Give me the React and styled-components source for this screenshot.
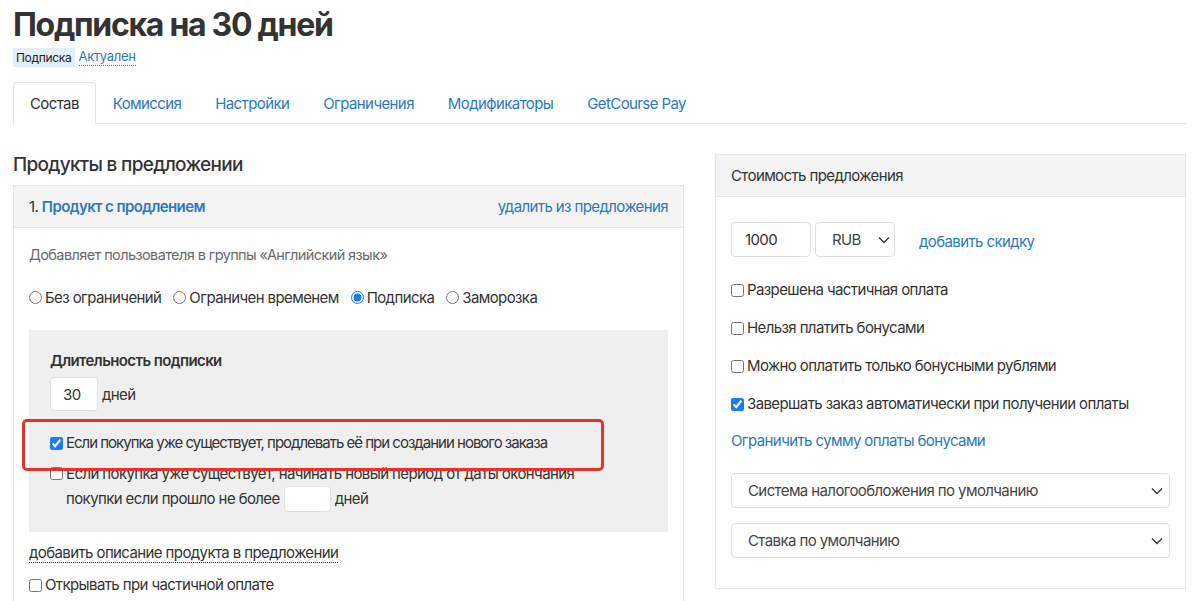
import React from "react";
import styled, { createGlobalStyle } from "styled-components";

const Global = createGlobalStyle`
  html, body { margin: 0; padding: 0; background: #fff; }
  body { font-family: Inter, "Noto Sans", sans-serif; color: #333; letter-spacing: -0.6px; }
  * { box-sizing: border-box; }
`;

const Page = styled.div`
  padding: 0 13px;
  width: 1199px;
`;

const Title = styled.h1`
  margin: 6px 0 0;
  font-size: 32px;
  line-height: 38px;
  font-weight: 700;
  color: #333;
  letter-spacing: -1.3px;
`;

const Meta = styled.div`
  display: flex;
  align-items: center;
  gap: 4px;
  margin-top: 4px;
  height: 19px;
`;

const Badge = styled.span`
  background: #e4eef9;
  font-size: 12px;
  line-height: 19px;
  padding: 0 3px;
  color: #222;
  letter-spacing: -0.3px;
`;

const DottedLink = styled.a`
  color: ${(p) => p.$color || "#2b79c0"};
  font-size: ${(p) => p.$size || 13}px;
  text-decoration: none;
  border-bottom: 1px dotted ${(p) => p.$color || "#2b79c0"};
  line-height: 1.2;
  letter-spacing: ${(p) => (p.$size ? "-0.6px" : "-0.3px")};
`;

const Tabs = styled.div`
  display: flex;
  align-items: flex-start;
  margin-top: 15px;
  height: 42px;
  border-bottom: 1px solid #e2e2e2;
  width: 1173px;
`;

const Tab = styled.div`
  height: 42px;
  padding: 0 16px;
  display: flex;
  align-items: center;
  font-size: 15px;
  color: ${(p) => (p.$active ? "#333" : "#2b79c0")};
  border: 1px solid ${(p) => (p.$active ? "#e2e2e2" : "transparent")};
  border-bottom-color: ${(p) => (p.$active ? "#fff" : "transparent")};
  border-radius: 4px 4px 0 0;
  background: ${(p) => (p.$active ? "#fff" : "transparent")};
  position: relative;
  z-index: ${(p) => (p.$active ? 1 : 0)};
`;

const Main = styled.div`
  display: grid;
  grid-template-columns: 671px 471px;
  column-gap: 31px;
  margin-top: 30px;
  align-items: start;
`;

const LeftCol = styled.div``;

const SectionTitle = styled.h2`
  margin: 0;
  font-size: 19px;
  font-weight: 500;
  line-height: 22px;
  height: 31px;
  color: #333;
  letter-spacing: -0.7px;
`;

const Panel = styled.div`
  border: 1px solid #e6e6e6;
  background: #fff;
`;

const PanelHeader = styled.div`
  height: 42px;
  background: #f4f4f4;
  border-bottom: 1px solid #e6e6e6;
  display: flex;
  align-items: center;
  justify-content: space-between;
  padding: 0 15px;
  font-size: 15px;
`;

const HeaderLink = styled.a`
  color: #2b79c0;
  text-decoration: none;
  font-weight: ${(p) => p.$weight || 400};
`;

const LeftBody = styled.div`
  padding: 15px 15px 6px;
`;

const Desc = styled.div`
  font-size: 14.5px;
  color: #6a6a6a;
  line-height: 24px;
`;

const RadioRow = styled.div`
  display: flex;
  align-items: center;
  gap: 12px;
  margin-top: 18px;
  font-size: 15px;
  height: 24px;
`;

const Choice = styled.label`
  display: inline-flex;
  align-items: center;
  gap: 3px;
  color: #333;
  input {
    margin: 0;
    width: 13px;
    height: 13px;
    accent-color: #1a7cf0;
  }
`;

const GrayBox = styled.div`
  margin-top: 21px;
  background: #efefef;
  padding: 21px 21px 20px;
`;

const Label = styled.div`
  font-size: 15px;
  font-weight: 600;
  line-height: 20px;
`;

const InlineRow = styled.div`
  display: flex;
  align-items: center;
  gap: 4px;
  font-size: 15px;
  margin-top: ${(p) => p.$mt || 0}px;
`;

const TextBox = styled.div`
  width: ${(p) => p.$w}px;
  height: ${(p) => p.$h}px;
  background: #fff;
  border: 1px solid #e0e0e0;
  border-radius: 4px;
  display: flex;
  align-items: center;
  padding-left: ${(p) => p.$pl || 12}px;
  font-size: 15px;
  color: #333;
`;

const Highlight = styled.div`
  position: relative;
  margin-top: 20px;
  height: 24px;
  display: flex;
  align-items: center;
  &::before {
    content: "";
    position: absolute;
    left: -28px;
    top: -12px;
    width: 576px;
    height: 46px;
    border: 3px solid #e5332a;
    border-radius: 5px;
    pointer-events: none;
  }
`;

const CheckLine = styled.label`
  display: flex;
  align-items: ${(p) => (p.$top ? "flex-start" : "center")};
  gap: 3px;
  font-size: 15px;
  color: #333;
  line-height: 24px;
  letter-spacing: ${(p) => (p.$tight ? "-1px" : "inherit")};
  margin-top: ${(p) => p.$mt || 0}px;
  input {
    margin: ${(p) => (p.$top ? "5px 0 0" : "0")};
    width: 13px;
    height: 13px;
    accent-color: #1a7cf0;
    flex: none;
  }
`;

const Wrapped = styled.div`
  display: flex;
  flex-direction: column;
`;

const DescLink = styled.div`
  margin-top: 10px;
  height: 22px;
  display: flex;
  align-items: center;
`;

const RightPanel = styled(Panel)`
  width: 471px;
`;

const RightHeader = styled(PanelHeader)`
  color: #333;
`;

const RightBody = styled.div`
  padding: 25px 15px 30px;
`;

const PriceRow = styled.div`
  display: flex;
  align-items: center;
  gap: 4px;
`;

const SelectBox = styled.div`
  width: ${(p) => p.$w}px;
  height: 35px;
  border: 1px solid #e0e0e0;
  border-radius: 4px;
  background: #fff;
  display: flex;
  align-items: center;
  justify-content: space-between;
  padding: 0 ${(p) => p.$pr || 10}px 0 ${(p) => p.$pl || 16}px;
  font-size: 15px;
  color: #444;
  margin-top: ${(p) => p.$mt || 0}px;
`;

const AddLink = styled.a`
  margin-left: 20px;
  padding-top: 3px;
  color: #2b79c0;
  font-size: 15px;
  text-decoration: none;
`;

const CheckList = styled.div`
  display: flex;
  flex-direction: column;
  gap: 14px;
  margin-top: 21px;
`;

const PlainLink = styled.a`
  display: block;
  margin-top: 13px;
  line-height: 24px;
  color: #2b79c0;
  font-size: 15px;
  text-decoration: none;
`;

const Chevron = () => (
  <svg width="12" height="8" viewBox="0 0 12 8" fill="none">
    <path d="M1 1.5l5 5 5-5" stroke="#333" strokeWidth="1.3" />
  </svg>
);

export default function App() {
  return (
    <>
      <Global />
      <Page>
        <Title>Подписка на 30 дней</Title>
        <Meta>
          <Badge>Подписка</Badge>
          <DottedLink>Актуален</DottedLink>
        </Meta>
        <Tabs>
          <Tab $active>Состав</Tab>
          <Tab>Комиссия</Tab>
          <Tab>Настройки</Tab>
          <Tab>Ограничения</Tab>
          <Tab>Модификаторы</Tab>
          <Tab>GetCourse Pay</Tab>
        </Tabs>
        <Main>
          <LeftCol>
            <SectionTitle>Продукты в предложении</SectionTitle>
            <Panel>
              <PanelHeader>
                <span>
                  1. <HeaderLink $weight={600}>Продукт с продлением</HeaderLink>
                </span>
                <HeaderLink>удалить из предложения</HeaderLink>
              </PanelHeader>
              <LeftBody>
                <Desc>Добавляет пользователя в группы «Английский язык»</Desc>
                <RadioRow>
                  <Choice><input type="radio" name="t" readOnly />Без ограничений</Choice>
                  <Choice><input type="radio" name="t" readOnly />Ограничен временем</Choice>
                  <Choice><input type="radio" name="t" defaultChecked />Подписка</Choice>
                  <Choice><input type="radio" name="t" readOnly />Заморозка</Choice>
                </RadioRow>
                <GrayBox>
                  <Label>Длительность подписки</Label>
                  <InlineRow $mt={6}>
                    <TextBox $w={48} $h={34} $pl={12}>30</TextBox>
                    <span>дней</span>
                  </InlineRow>
                  <Highlight>
                    <CheckLine $tight>
                      <input type="checkbox" defaultChecked />
                      Если покупка уже существует, продлевать её при создании нового заказа
                    </CheckLine>
                  </Highlight>
                  <CheckLine $top $mt={7}>
                    <input type="checkbox" />
                    <Wrapped>
                      <span>Если покупка уже существует, начинать новый период от даты окончания</span>
                      <InlineRow>
                        <span>покупки если прошло не более</span>
                        <TextBox $w={47} $h={26} />
                        <span>дней</span>
                      </InlineRow>
                    </Wrapped>
                  </CheckLine>
                </GrayBox>
                <DescLink>
                  <DottedLink $color="#333" $size={15}>добавить описание продукта в предложении</DottedLink>
                </DescLink>
                <CheckLine $mt={9}>
                  <input type="checkbox" />
                  Открывать при частичной оплате
                </CheckLine>
              </LeftBody>
            </Panel>
          </LeftCol>
          <RightPanel>
            <RightHeader>Стоимость предложения</RightHeader>
            <RightBody>
              <PriceRow>
                <TextBox $w={80} $h={35} $pl={13}>1000</TextBox>
                <SelectBox $w={80} $pl={16} $pr={4}>
                  RUB
                  <Chevron />
                </SelectBox>
                <AddLink>добавить скидку</AddLink>
              </PriceRow>
              <CheckList>
                <CheckLine><input type="checkbox" />Разрешена частичная оплата</CheckLine>
                <CheckLine><input type="checkbox" />Нельзя платить бонусами</CheckLine>
                <CheckLine><input type="checkbox" />Можно оплатить только бонусными рублями</CheckLine>
                <CheckLine><input type="checkbox" defaultChecked />Завершать заказ автоматически при получении оплаты</CheckLine>
              </CheckList>
              <PlainLink>Ограничить сумму оплаты бонусами</PlainLink>
              <SelectBox $w={439} $mt={20} $pr={6}>
                Система налогообложения по умолчанию
                <Chevron />
              </SelectBox>
              <SelectBox $w={439} $mt={15} $pr={6}>
                Ставка по умолчанию
                <Chevron />
              </SelectBox>
            </RightBody>
          </RightPanel>
        </Main>
      </Page>
    </>
  );
}
